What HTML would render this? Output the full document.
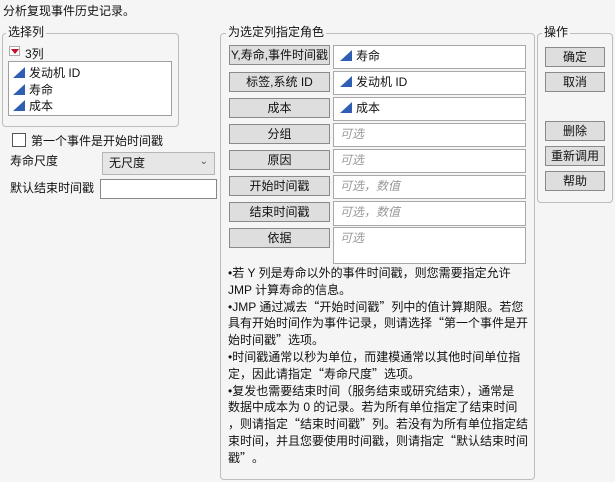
<!DOCTYPE html>
<html><head><meta charset="utf-8"><style>
*{box-sizing:border-box;margin:0;padding:0}
body{width:615px;height:482px;background:#f5f5f5;font-family:"Liberation Sans","Noto Sans CJK SC",sans-serif;font-size:12px;color:#111;position:relative;overflow:hidden}
.a{position:absolute;white-space:nowrap}
.grp{position:absolute;border:1px solid #bdbdbd;border-radius:4px}
.lg{position:absolute;background:#f5f5f5;padding:0 2px;line-height:14px}
.btn{position:absolute;background:#dedede;border:1px solid #8a8a8a;text-align:center;line-height:18px;height:20px}
.fld{position:absolute;background:#fff;border:1px solid #a8a8a8;padding-left:6px;line-height:20px}
.ph{color:#999;font-style:italic}
.tri{display:inline-block;width:0;height:0;border-left:12px solid transparent;border-bottom:11px solid #2f5fb3;margin-right:4px;vertical-align:-1px}
.note{position:absolute;left:228px;top:265px;line-height:16.8px;white-space:nowrap}
.q{font-family:"Noto Sans CJK SC",sans-serif;display:inline-block;width:12px;text-align:center}
</style></head><body>
<div class="a" style="left:3px;top:2px">分析复现事件历史记录。</div>

<div class="grp" style="left:2px;top:33px;width:177px;height:94px"></div>
<div class="lg a" style="left:6px;top:25px">选择列</div>
<div class="a" style="left:9px;top:46px;width:11px;height:10px;border:1px solid #aaa;background:#fff"></div>
<div class="a" style="left:11px;top:49px;width:0;height:0;border-left:4px solid transparent;border-right:4px solid transparent;border-top:5px solid #c0102a"></div>
<div class="a" style="left:25px;top:45px">3列</div>
<div class="a" style="left:8px;top:61px;width:164px;height:55px;border:1px solid #a0a0a0;background:#fff"></div>
<div class="a" style="left:13px;top:64px"><span class="tri"></span>发动机 ID</div>
<div class="a" style="left:13px;top:81px"><span class="tri"></span>寿命</div>
<div class="a" style="left:13px;top:97px"><span class="tri"></span>成本</div>

<div class="a" style="left:12px;top:133px;width:14px;height:14px;border:1px solid #555;background:#fff"></div>
<div class="a" style="left:31px;top:132px">第一个事件是开始时间戳</div>
<div class="a" style="left:10px;top:152px">寿命尺度</div>
<div class="a" style="left:102px;top:152px;width:113px;height:23px;border:1px solid #b5b5b5;background:#e6e6e6;padding-left:6px;line-height:21px">无尺度<span style="position:absolute;right:6px;top:-2px;font-size:10px;color:#555">⌄</span></div>
<div class="a" style="left:10px;top:179px">默认结束时间戳</div>
<div class="a" style="left:100px;top:179px;width:117px;height:20px;border:1px solid #888;background:#fff"></div>

<div class="grp" style="left:220px;top:33px;width:315px;height:447px"></div>
<div class="lg a" style="left:226px;top:25px">为选定列指定角色</div>
<div class="btn" style="left:229px;top:45px;width:101px">Y,寿命,事件时间戳</div>
<div class="btn" style="left:229px;top:72px;width:101px">标签,系统 ID</div>
<div class="btn" style="left:229px;top:98px;width:101px">成本</div>
<div class="btn" style="left:229px;top:124px;width:101px">分组</div>
<div class="btn" style="left:229px;top:150px;width:101px">原因</div>
<div class="btn" style="left:229px;top:176px;width:101px">开始时间戳</div>
<div class="btn" style="left:229px;top:202px;width:101px">结束时间戳</div>
<div class="btn" style="left:229px;top:228px;width:101px">依据</div>
<div class="fld" style="left:333px;top:45px;width:193px;height:24px"><span class="tri"></span>寿命</div>
<div class="fld" style="left:333px;top:71px;width:193px;height:24px"><span class="tri"></span>发动机 ID</div>
<div class="fld" style="left:333px;top:97px;width:193px;height:24px"><span class="tri"></span>成本</div>
<div class="fld ph" style="left:333px;top:123px;width:193px;height:24px">可选</div>
<div class="fld ph" style="left:333px;top:149px;width:193px;height:24px">可选</div>
<div class="fld ph" style="left:333px;top:175px;width:193px;height:24px">可选，数值</div>
<div class="fld ph" style="left:333px;top:201px;width:193px;height:25px">可选，数值</div>
<div class="fld ph" style="left:333px;top:227px;width:193px;height:37px">可选</div>
<div class="note">•若 Y 列是寿命以外的事件时间戳，则您需要指定允许<br>JMP 计算寿命的信息。<br>•JMP 通过减去<span class="q">“</span>开始时间戳<span class="q">”</span>列中的值计算期限。若您<br>具有开始时间作为事件记录，则请选择<span class="q">“</span>第一个事件是开<br>始时间戳<span class="q">”</span>选项。<br>•时间戳通常以秒为单位，而建模通常以其他时间单位指<br>定，因此请指定<span class="q">“</span>寿命尺度<span class="q">”</span>选项。<br>•复发也需要结束时间（服务结束或研究结束），通常是<br>数据中成本为 0 的记录。若为所有单位指定了结束时间<br>，则请指定<span class="q">“</span>结束时间戳<span class="q">”</span>列。若没有为所有单位指定结<br>束时间，并且您要使用时间戳，则请指定<span class="q">“</span>默认结束时间<br>戳<span class="q">”</span>。</div>

<div class="grp" style="left:537px;top:33px;width:76px;height:170px"></div>
<div class="lg a" style="left:542px;top:25px">操作</div>
<div class="btn" style="left:545px;top:47px;width:60px">确定</div>
<div class="btn" style="left:545px;top:72px;width:60px">取消</div>
<div class="btn" style="left:545px;top:121px;width:60px">删除</div>
<div class="btn" style="left:545px;top:146px;width:60px">重新调用</div>
<div class="btn" style="left:545px;top:171px;width:60px">帮助</div>
</body></html>
